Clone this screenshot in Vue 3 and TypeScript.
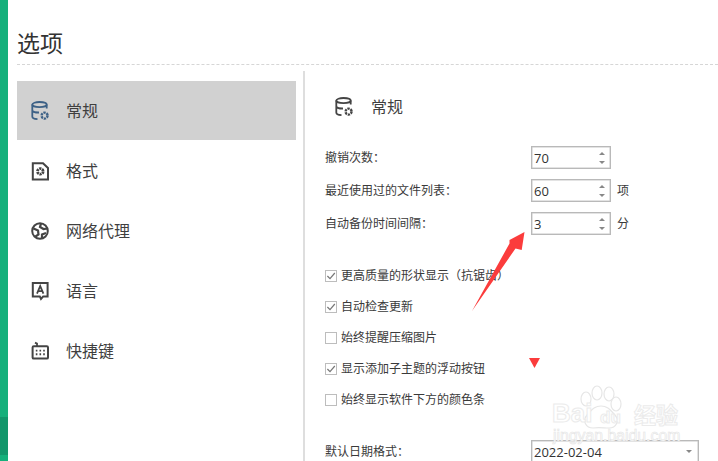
<script setup lang="ts">
interface NavItem { key: string; label: string }
const navItems: NavItem[] = [
  { key: 'general', label: '常规' },
  { key: 'format', label: '格式' },
  { key: 'proxy', label: '网络代理' },
  { key: 'lang', label: '语言' },
  { key: 'keys', label: '快捷键' },
]
const numberRows = [
  { label: '撤销次数：', value: '70', unit: '' },
  { label: '最近使用过的文件列表：', value: '60', unit: '项' },
  { label: '自动备份时间间隔：', value: '3', unit: '分' },
]
const checks = [
  { label: '更高质量的形状显示（抗锯齿）', on: true },
  { label: '自动检查更新', on: true },
  { label: '始终提醒压缩图片', on: false },
  { label: '显示添加子主题的浮动按钮', on: true },
  { label: '始终显示软件下方的颜色条', on: false },
]
</script>

<template>
  <div class="app">
    <div class="strip"></div>
    <div class="page">
      <h1 class="title">选项</h1>
      <div class="body">
        <nav class="nav">
          <div v-for="(item, i) in navItems" :key="item.key" class="nav-item" :class="{ active: i === 0 }">
            <svg class="nav-icon" viewBox="0 0 18 20" fill="none" stroke="currentColor" stroke-width="1.8">
              <template v-if="item.key === 'general'">
                <ellipse cx="8.5" cy="3.6" rx="7.2" ry="2.6" />
                <path d="M1.3 3.6V15.5C1.3 17 3 18 6.5 18.2M15.7 3.6V7.5M1.3 9.8C2.5 11.2 5 11.6 8 11.5" />
                <circle cx="13.6" cy="14.6" r="3" stroke-width="2.4" stroke-dasharray="2.3 0.84" />
              </template>
              <template v-else-if="item.key === 'format'">
                <path d="M1.8 2.2H12L17 7V18.4H1.8Z" stroke-width="2" />
                <circle cx="9.3" cy="10.4" r="2.8" stroke-width="2.8" stroke-dasharray="2.2 0.73" />
              </template>
              <template v-else-if="item.key === 'proxy'">
                <circle cx="9" cy="10" r="7.8" stroke-width="2" />
                <path d="M2.5 7.5L7 9.5L7.5 13.5L4.5 15.5M10 2.5L9 6L12.5 8L16.5 7.5M11 17.5L11 13.5L15 12" stroke-width="2.2" />
              </template>
              <template v-else-if="item.key === 'lang'">
                <path d="M1.8 2H16.6V15.4H12.2L10 18L8.8 15.4H1.8Z" stroke-width="2" />
                <path d="M6 12.6L9.2 5L12.4 12.6M7.2 10.2H11.2" stroke-width="1.8" />
              </template>
              <template v-else>
                <rect x="1.6" y="5.2" width="15.4" height="12.4" rx="1.2" stroke-width="2" />
                <path d="M6 5L6 2.6L4 1.6" stroke-width="1.8" />
                <path d="M4.8 9.6H6.4M8.5 9.6H10.1M12.2 9.6H13.8M4.8 13.2H6.4M8.5 13.2H10.1M12.2 13.2H13.8" stroke-width="1.9" />
              </template>
            </svg>
            <span class="nav-label">{{ item.label }}</span>
          </div>
        </nav>

        <main class="main">
          <header class="main-head">
            <svg class="nav-icon" viewBox="0 0 18 20" fill="none" stroke="currentColor" stroke-width="1.8">
              <ellipse cx="8.5" cy="3.6" rx="7.2" ry="2.6" />
              <path d="M1.3 3.6V15.5C1.3 17 3 18 6.5 18.2M15.7 3.6V7.5M1.3 9.8C2.5 11.2 5 11.6 8 11.5" />
              <circle cx="13.6" cy="14.6" r="3" stroke-width="2.4" stroke-dasharray="2.3 0.84" />
            </svg>
            <span class="main-title">常规</span>
          </header>

          <div class="number-rows">
            <div v-for="row in numberRows" :key="row.label" class="field-row">
              <span class="field-label">{{ row.label }}</span>
              <div class="spin">
                <span class="spin-value">{{ row.value }}</span>
                <span class="spin-arrows"><i class="up"></i><i class="down"></i></span>
              </div>
              <span class="unit">{{ row.unit }}</span>
            </div>
          </div>

          <div class="checks">
            <label v-for="c in checks" :key="c.label" class="check">
              <span class="box">
                <svg v-if="c.on" viewBox="0 0 12 12" width="12" height="12" fill="none" stroke="#777" stroke-width="1.2">
                  <path d="M2.4 6L5 8.6L9.8 3" />
                </svg>
              </span>
              <span class="check-label">{{ c.label }}</span>
            </label>
          </div>

          <div class="field-row date-row">
            <span class="field-label">默认日期格式：</span>
            <div class="select">
              <span class="spin-value">2022-02-04</span>
              <i class="down"></i>
            </div>
          </div>
        </main>
      </div>
    </div>

    <svg class="overlay-arrow" viewBox="0 0 718 461" width="718" height="461">
      <polygon points="524.5,232 509.5,240 509.5,243.5 472,311 515.5,248.5 521.7,250" fill="#fb3c3c" />
      <polygon points="529,358 540,358 534.5,368" fill="#fb3c3c" />
    </svg>

    <div class="watermark">
      <svg class="paw" viewBox="0 0 100 60" width="100" height="60" fill="#fff" stroke="#e6e6e6" stroke-width="1.2">
        <ellipse cx="41" cy="14" rx="5" ry="7" />
        <ellipse cx="52" cy="8" rx="5" ry="7" />
        <ellipse cx="64" cy="9" rx="5" ry="7" />
        <ellipse cx="71" cy="19" rx="5" ry="7" />
        <path d="M56 21C63 21 66 26 70 30C75 36 71 43 64 43C59 43 54 42 48 43C41 43 37 36 42 30C46 26 49 21 56 21Z" />
      </svg>
      <span class="wm-bai">Bai</span>
      <span class="wm-du">du</span>
      <span class="wm-jy">经验</span>
      <span class="wm-url">jingyan.baidu.com</span>
    </div>
  </div>
</template>

<style>
html, body { margin: 0; overflow: hidden; background: #fff; }
</style>

<style scoped>
.app {
  position: relative;
  display: flex;
  width: 718px;
  height: 461px;
  overflow: hidden;
  background: #fff;
  color: #3a3a3a;
  font-family: "Noto Sans CJK SC", "Liberation Sans", sans-serif;
  text-spacing-trim: space-all;
}
.strip {
  flex: 0 0 8px;
  background: linear-gradient(#15b07b 417px, #12976b 417px, #12976b 455px, #15b07b 455px);
}
.page {
  flex: 1;
  min-width: 0;
  padding-left: 9px;
  display: flex;
  flex-direction: column;
}
.title {
  margin: 0;
  padding-top: 25px;
  height: 39px;
  border-bottom: 1px dashed #d6d6d6;
  font-size: 23px;
  font-weight: 400;
  line-height: 34px;
  color: #333;
}
.body {
  flex: 1;
  min-height: 0;
  display: flex;
  margin-top: 6px;
}
.nav {
  flex: 0 0 279px;
  margin-right: 7px;
  padding-top: 10px;
  display: flex;
  flex-direction: column;
  gap: 1px;
}
.nav-item {
  height: 59px;
  display: flex;
  align-items: center;
  padding-left: 14px;
  color: #444;
}
.nav-item.active {
  background: #d1d1d1;
  color: #3d6186;
}
.nav-icon {
  width: 18px;
  height: 20px;
  flex: none;
}
.nav-label {
  margin: 0 0 2px 17px;
  font-size: 16px;
  color: #3f3f3f;
}
.main {
  flex: 1;
  min-width: 0;
  border-left: 2px solid #dedede;
  padding-left: 20px;
}
.main-head {
  display: flex;
  align-items: center;
  height: 24px;
  margin: 24px 0 27px 10px;
  color: #444;
}
.main-title {
  margin: 0 0 2px 18px;
  font-size: 16px;
  color: #3f3f3f;
}
.number-rows {
  display: flex;
  flex-direction: column;
  gap: 10px;
}
.field-row {
  display: flex;
  align-items: center;
  height: 23px;
  font-size: 12px;
}
.field-label {
  flex: 0 0 206px;
  margin-bottom: 2px;
}
.spin {
  flex: 0 0 80px;
  height: 23px;
  box-sizing: border-box;
  border: 1px solid #b9b9b9;
  box-shadow: inset 0 0 0 0.5px #c8c8c8;
  display: flex;
  align-items: center;
  justify-content: space-between;
  padding: 0 5px 0 2px;
}
.spin-value {
  font-family: "Open Sans", "Liberation Sans", sans-serif;
  font-size: 13px;
  color: #333;
}
.spin-arrows {
  display: flex;
  flex-direction: column;
  gap: 6px;
}
.up, .down {
  display: block;
  width: 0;
  height: 0;
  border-left: 3px solid transparent;
  border-right: 3px solid transparent;
}
.up { border-bottom: 3px solid #888; }
.down { border-top: 3px solid #888; }
.unit {
  margin: 0 0 2px 6px;
}
.checks {
  margin-top: 30px;
  display: flex;
  flex-direction: column;
  gap: 10px;
}
.check {
  display: flex;
  align-items: center;
  height: 21px;
  font-size: 12px;
}
.check-label {
  margin-bottom: 2px;
}
.box {
  width: 12px;
  height: 12px;
  box-sizing: border-box;
  border: 1px solid #bdbdbd;
  margin-right: 4px;
  display: flex;
  align-items: center;
  justify-content: center;
  flex: none;
}
.box svg { flex: none; margin: -1px; }
.date-row {
  margin-top: 30px;
}
.select {
  flex: 0 0 168px;
  height: 24px;
  box-sizing: border-box;
  border: 1px solid #b9b9b9;
  box-shadow: inset 0 0 0 0.5px #c8c8c8;
  display: flex;
  align-items: center;
  justify-content: space-between;
  padding: 0 6px 0 2px;
}
.overlay-arrow {
  position: absolute;
  left: 0;
  top: 0;
  pointer-events: none;
}
.watermark {
  position: absolute;
  left: 545px;
  top: 385px;
  width: 150px;
  height: 58px;
  color: #fff;
  font-family: "Liberation Sans", sans-serif;
  pointer-events: none;
}
.paw {
  position: absolute;
  left: 0;
  top: 0;
}
.wm-bai, .wm-du, .wm-jy, .wm-url {
  position: absolute;
  -webkit-text-stroke: 1px #ebebeb;
}
.wm-bai { left: 7px; top: 13px; font-size: 26px; line-height: 30px; font-weight: 700; }
.wm-du { left: 55px; top: 23px; font-size: 17px; line-height: 20px; font-weight: 700; }
.wm-jy { left: 89px; top: 15px; font-size: 22px; line-height: 26px; font-family: "Noto Sans CJK SC", sans-serif; font-weight: 700; }
.wm-url { left: 8px; top: 44px; font-size: 15.8px; line-height: 14px; -webkit-text-stroke: 0.6px #e4e4e4; }
</style>
